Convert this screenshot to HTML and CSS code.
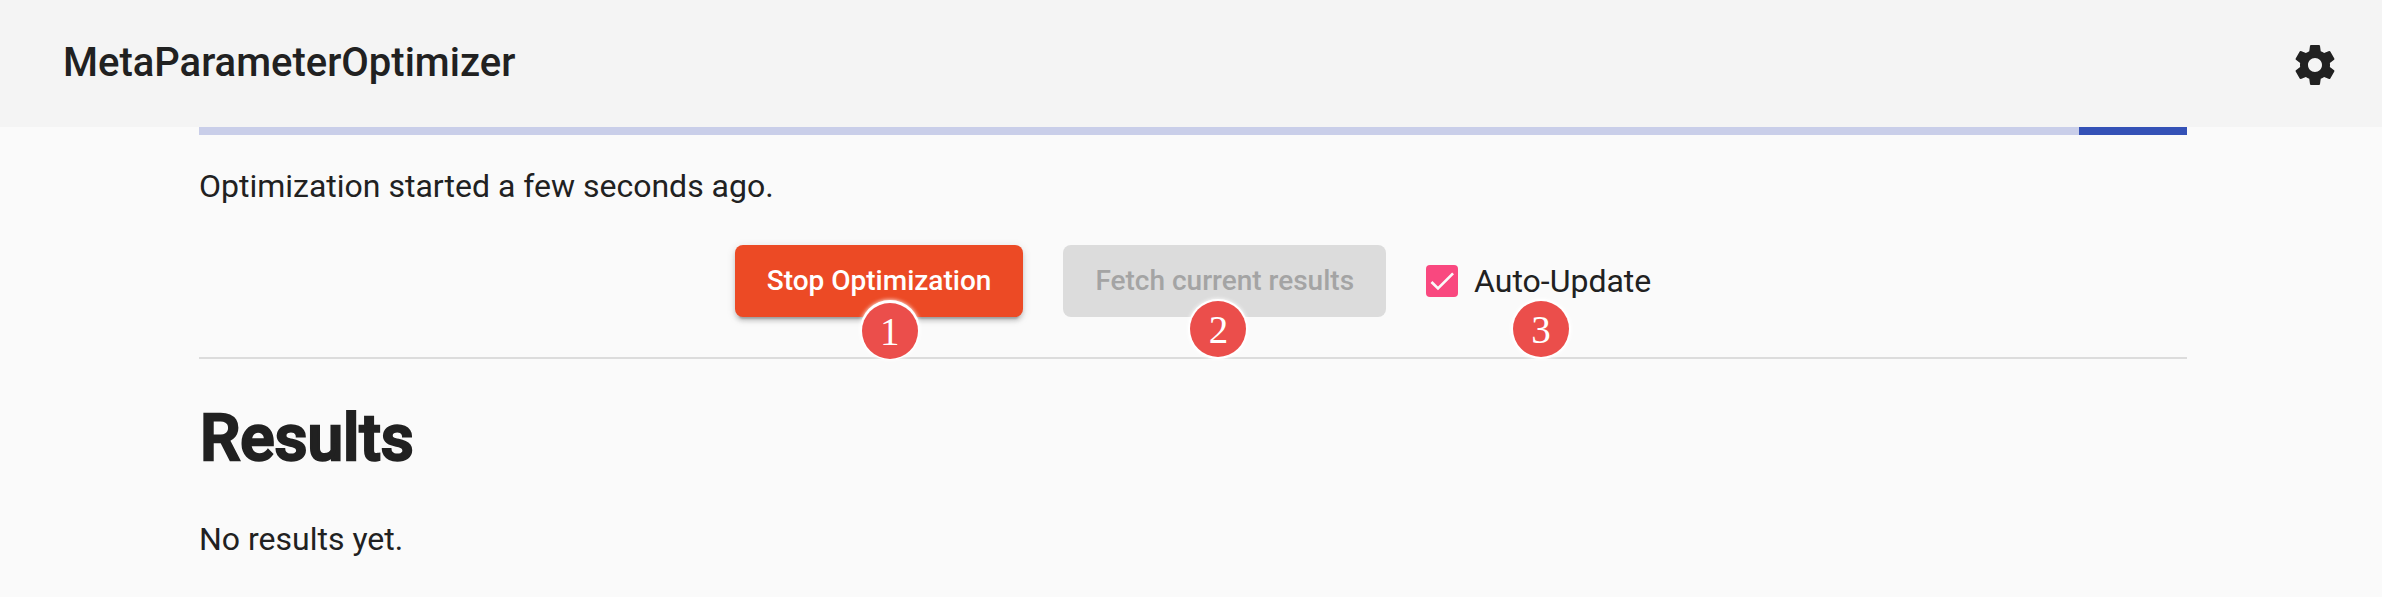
FILE: index.html
```html
<!DOCTYPE html>
<html lang="en">
<head>
<meta charset="utf-8">
<title>MetaParameterOptimizer</title>
<link rel="stylesheet" href="styles.css">
</head>
<body>
<header class="toolbar">
  <span class="toolbar-title">MetaParameterOptimizer</span>
  <svg class="toolbar-icon" viewBox="0 0 24 24" role="img" aria-label="Settings"><path d="M19.43 12.98c.04-.32.07-.64.07-.98s-.03-.66-.07-.98l2.110-1.650c.19-.15.24-.42.12-.64l-2-3.460c-.12-.22-.39-.3-.61-.22l-2.490 1c-.52-.4-1.080-.73-1.690-.98l-.38-2.650C14.460 2.180 14.250 2 14 2h-4c-.25 0-.46.18-.49.42l-.38 2.650c-.61.25-1.170.59-1.690.98l-2.490-1c-.23-.09-.49 0-.61.22l-2 3.460c-.13.22-.07.49.12.64l2.110 1.650c-.04.32-.07.65-.07.98s.03.66.07.98l-2.110 1.650c-.19.15-.24.42-.12.64l2 3.460c.12.22.39.3.61.22l2.490-1c.52.4 1.080.73 1.690.98l.38 2.650c.03.24.24.42.49.42h4c.25 0 .46-.18.49-.42l.38-2.650c.61-.25 1.170-.59 1.690-.98l2.490 1c.23.09.49 0 .61-.22l2-3.460c.12-.22.07-.49-.12-.64l-2.110-1.650zM12 15.500c-1.930 0-3.500-1.570-3.500-3.500s1.570-3.500 3.500-3.500 3.500 1.570 3.500 3.500-1.570 3.500-3.500 3.500z"/></svg>
</header>
<main class="content">
  <div class="progress"><div class="progress-fill"></div></div>
  <p class="status">Optimization started a few seconds ago.</p>
  <div class="actions">
    <button class="button button-stop" type="button">Stop Optimization<span class="badge badge-stop">1</span></button>
    <button class="button button-fetch" type="button">Fetch current results<span class="badge badge-fetch">2</span></button>
    <label class="checkbox">
      <span class="checkbox-box"><svg class="checkbox-mark" viewBox="0 0 24 24"><path d="M4.100 12.700 9 17.600 20.300 6.300"/></svg></span>
      <span>Auto-Update</span>
      <span class="badge badge-update">3</span>
    </label>
  </div>
  <h1 class="heading">Results</h1>
  <p class="empty">No results yet.</p>
</main>
</body>
</html>
```
FILE: styles.css
```css
body {
  margin: 0;
  min-height: 597px;
  background: #fafafa;
  color: #212121;
  font: 400 32px/48px Roboto, sans-serif;
}

.toolbar {
  display: flex;
  align-items: center;
  justify-content: space-between;
  box-sizing: border-box;
  height: 127px;
  padding: 0 43px 0 63px;
  background: #f4f4f4;
}

.toolbar-title {
  padding-bottom: 1px;
  font-size: 40px;
  font-weight: 500;
}

.toolbar-icon {
  width: 48px;
  height: 48px;
  padding-top: 3px;
  fill: #212121;
}

.content {
  width: 1988px;
  margin-left: 199px;
}

.progress {
  display: flex;
  justify-content: flex-end;
  height: 8px;
  background: #c9cee9;
}

.progress-fill {
  width: 108px;
  background: #3451b6;
}

.status {
  margin: 0;
  padding-top: 27px;
}

.actions {
  display: flex;
  align-items: center;
  justify-content: center;
  gap: 40px;
  box-sizing: border-box;
  height: 149px;
  padding-top: 35px;
  padding-bottom: 40px;
  border-bottom: 2px solid #dcdcdc;
}

.button {
  position: relative;
  height: 72px;
  padding: 0 32px;
  border: 0;
  border-radius: 8px;
  font: 500 28px/72px Roboto, sans-serif;
  white-space: nowrap;
}

.button-stop {
  background: #ec4a25;
  color: #fff;
  box-shadow: 0 6px 2px -4px rgba(0, 0, 0, .2), 0 4px 4px rgba(0, 0, 0, .14), 0 2px 10px rgba(0, 0, 0, .12);
}

.button-fetch {
  background: #dcdcdc;
  color: #a4a4a4;
}

.checkbox {
  position: relative;
  display: flex;
  align-items: center;
  gap: 16px;
}

.checkbox-box {
  width: 32px;
  height: 32px;
  border-radius: 4px;
  background: #f9487f;
}

.checkbox-mark {
  display: block;
  width: 32px;
  height: 32px;
  fill: none;
  stroke: #fafafa;
  stroke-width: 2;
}

.badge {
  position: absolute;
  width: 56px;
  height: 56px;
  border-radius: 50%;
  background: #eb4e4b;
  color: #fff;
  box-shadow: 0 0 0 2px #fff, 0 0 4px 2px #fff;
  font: 400 39px/57px "Liberation Serif", serif;
  text-align: center;
}

.badge-stop {
  left: 127px;
  top: 58px;
  line-height: 58px;
  box-shadow: 0 -1px 0 2px #fff, 0 -1px 4px 2px #fff;
}

.badge-fetch {
  left: 127px;
  top: 56px;
}

.badge-update {
  left: 87px;
  top: 44px;
}

.heading {
  margin: 0;
  padding: 48px 0 0 1px;
  font-size: 64px;
  font-weight: 500;
  line-height: 64px;
  -webkit-text-stroke: 2.500px #212121;
}

.empty {
  margin: 0;
  padding-top: 44px;
}
```
